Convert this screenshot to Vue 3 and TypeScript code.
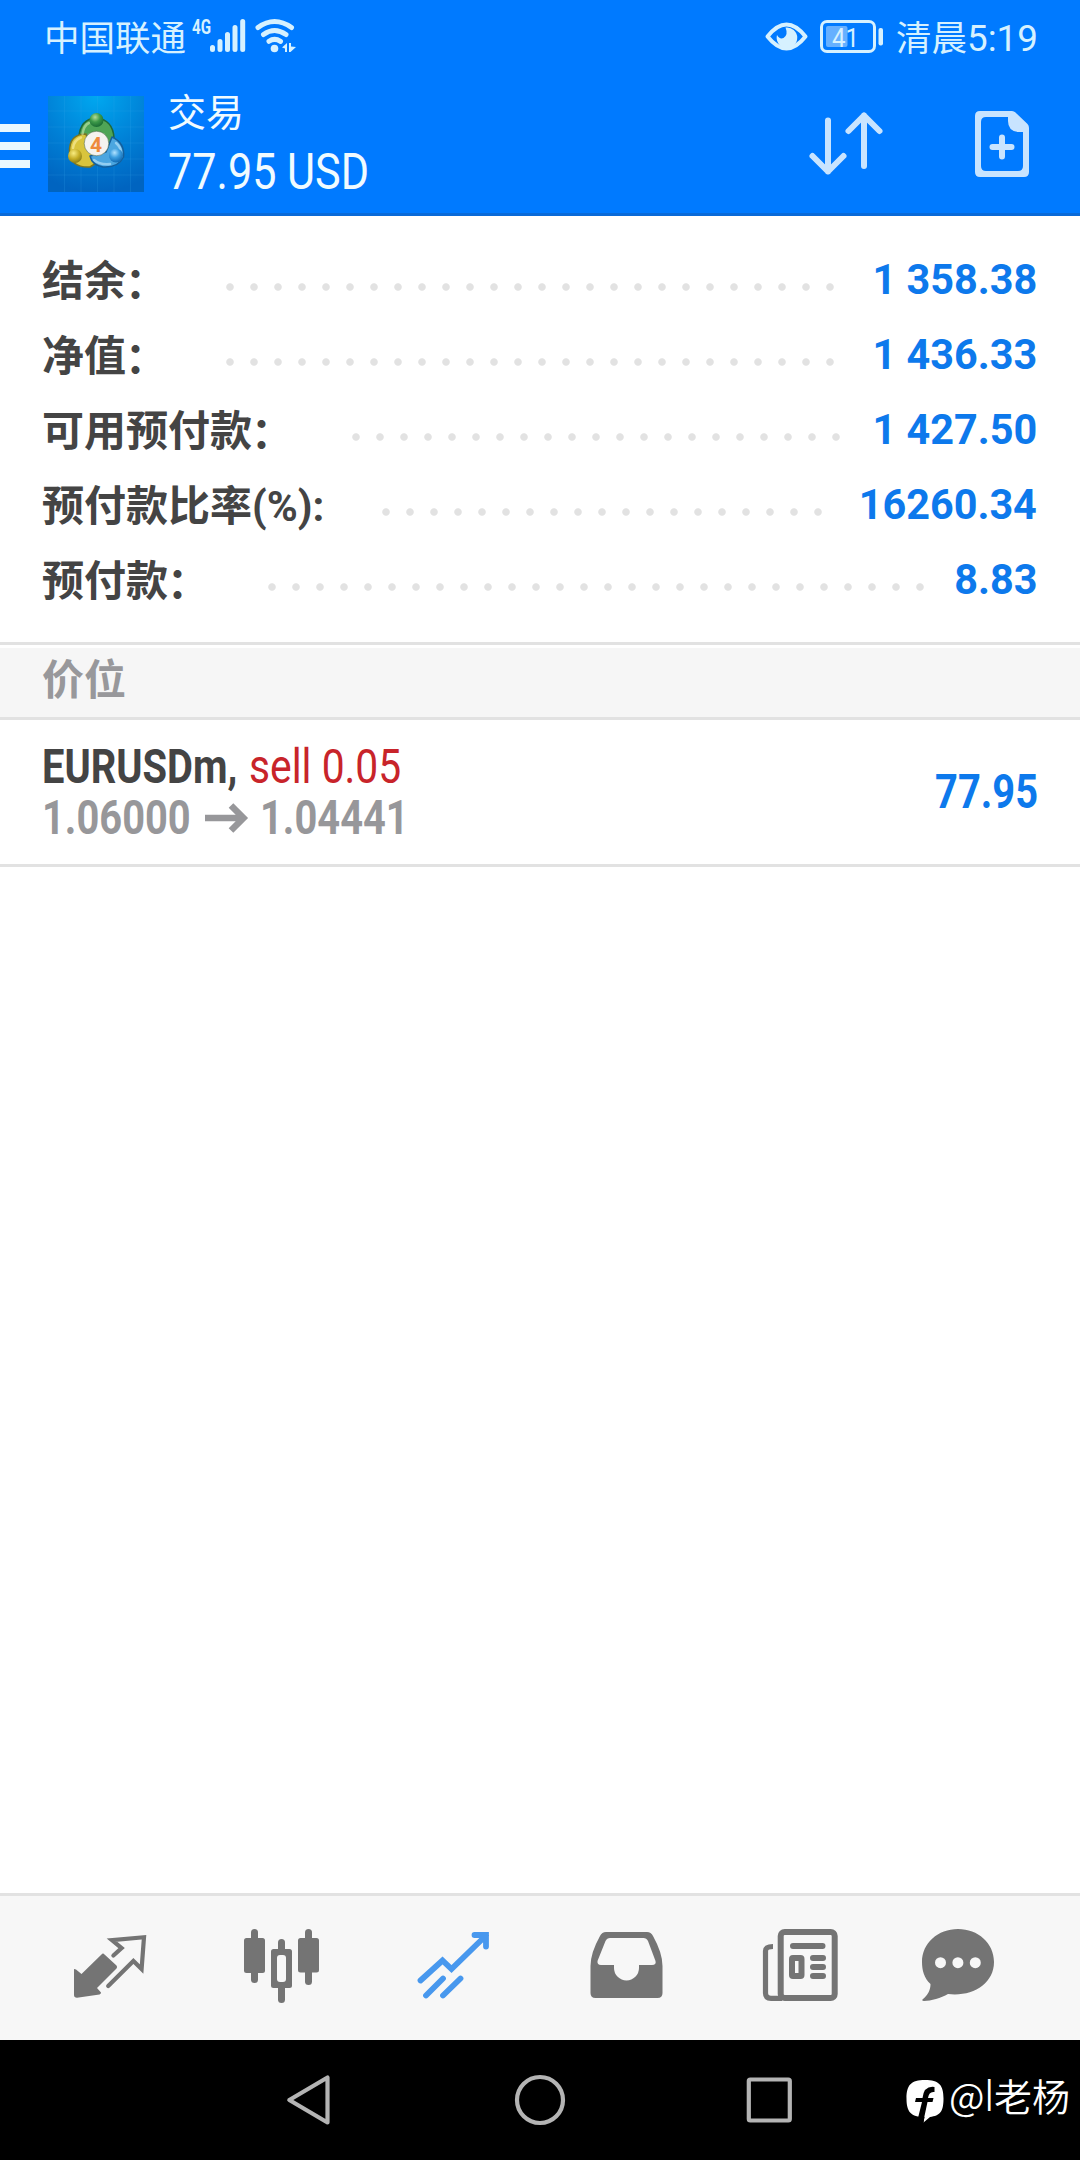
<script setup lang="ts">
interface SummaryRow {
  label: string
  colon: string
  value: string
  dots: number
}

const summary: SummaryRow[] = [
  { label: '结余', colon: '：', value: '1 358.38', dots: 26 },
  { label: '净值', colon: '：', value: '1 436.33', dots: 26 },
  { label: '可用预付款', colon: '：', value: '1 427.50', dots: 21 },
  { label: '预付款比率(%):', colon: '', value: '16260.34', dots: 19 },
  { label: '预付款', colon: '：', value: '8.83', dots: 28 },
]
</script>

<template>
  <div class="screen">
    <header class="top">
      <div class="status">
        <span class="carrier">中国联通</span>
        <svg class="net" viewBox="188 10 116 50" width="116" height="50">
          <text x="192" y="34" class="g4" textLength="19" lengthAdjust="spacingAndGlyphs">4G</text>
          <g stroke="#d6f1ff" stroke-width="5" stroke-linecap="round">
            <path d="M212.5 47.5V49.5M220 41.5V49.5M227.5 34.5V49.5M235 27.5V49.5M242.7 21.5V49.5" />
          </g>
          <g fill="none" stroke="#d6f1ff" stroke-width="5" stroke-linecap="round">
            <path d="M258 27.5Q274.5 15.5 291.500 27.500" />
            <path d="M263.500 34.500Q274.500 26.500 286 34.500" />
            <path d="M269 41.300Q274.500 37.500 280.500 41.300" />
          </g>
          <circle cx="274.500" cy="48.500" r="3.800" fill="#d6f1ff" />
          <path d="M282 47.500L287 43V52H285V48.500ZM289 43H291V46.500L296 47L290.500 52H289Z" fill="#d6f1ff" />
        </svg>
        <div class="grow"></div>
        <svg class="sys" viewBox="760 10 130 50" width="130" height="50">
          <path d="M767.500 36.500Q786.500 12.500 805.500 36.500Q786.500 60.500 767.500 36.500Z" fill="none" stroke="#d6f1ff" stroke-width="4" stroke-linejoin="round" />
          <path d="M785.500 27.500A10.300 10.300 0 1 1 777 35Q779.500 39.500 783.500 38Q788.500 35 785.500 27.500Z" fill="#d6f1ff" />
          <rect x="821.500" y="21.500" width="53" height="30" rx="5.500" fill="none" stroke="#d6f1ff" stroke-width="3" />
          <rect x="826" y="26" width="21.500" height="21" rx="2" fill="#66b0ff" />
          <text x="832" y="46.500" class="pct" textLength="27" lengthAdjust="spacingAndGlyphs">41</text>
          <rect x="878.500" y="28" width="4.500" height="17.500" rx="2" fill="#d6f1ff" />
        </svg>
        <span class="clock">清晨<span class="time">5:19</span></span>
      </div>
      <div class="bar">
        <svg class="menu" viewBox="0 124 30 44" width="30" height="44" fill="#eaf8ff">
          <path d="M0 124H30V132H0ZM0 142H30V150H0ZM0 160H30V168H0Z" />
        </svg>
        <svg class="logo" viewBox="0 0 96 96" width="96" height="96">
          <defs>
            <radialGradient id="bg" cx="0.5" cy="0" r="1">
              <stop offset="0" stop-color="#00a8f0" />
              <stop offset="0.55" stop-color="#0080d6" />
              <stop offset="1" stop-color="#0064c0" />
            </radialGradient>
            <radialGradient id="gr" cx="0.4" cy="0.3" r="0.7"><stop offset="0" stop-color="#b5dc98" /><stop offset="0.5" stop-color="#3d9a49" /><stop offset="1" stop-color="#1a6c34" /></radialGradient>
            <radialGradient id="ye" cx="0.4" cy="0.3" r="0.7"><stop offset="0" stop-color="#f8ec80" /><stop offset="0.6" stop-color="#c4ac24" /><stop offset="1" stop-color="#8d8018" /></radialGradient>
            <radialGradient id="bl" cx="0.4" cy="0.3" r="0.7"><stop offset="0" stop-color="#b0e2ff" /><stop offset="0.5" stop-color="#3d9fe0" /><stop offset="1" stop-color="#126bb4" /></radialGradient>
          </defs>
          <rect width="96" height="96" fill="url(#bg)" />
          <path d="M16.500 0V96M33 0V96M49.500 0V96M66 0V96M82.500 0V96M0 15H96M0 31H96M0 47H96M0 63H96M0 79H96" stroke="#35aef0" stroke-opacity="0.18" />
          <g stroke-linejoin="round" stroke-width="1.500">
            <path d="M31 41Q32 23 48.500 22Q65 24 66 42Q66 50 60 54L36 50Q31 47 31 41Z" fill="#4fa556" stroke="#1f6938" />
            <path d="M38 38Q21 38 21.500 56Q23 72 42 71L50 66L40 46Z" fill="#d9c43c" stroke="#7d7620" />
            <path d="M64 41Q77 47 75.500 61Q70 72 55 71Q44 69 42 60L58 56Z" fill="#4ba6e0" stroke="#145f9c" />
          </g>
          <g fill="none" stroke-linecap="round" stroke-opacity="0.55" stroke-width="2.500">
            <path d="M34.500 38Q36 29 41 27" stroke="#d5f0b8" />
            <path d="M25 52Q26 44 33 41.500" stroke="#fff6b0" />
            <path d="M68 47Q73 51 73 57M46 64Q52 69 62 68" stroke="#d0eeff" />
          </g>
          <circle cx="48.500" cy="24" r="7" fill="url(#gr)" />
          <circle cx="27" cy="60" r="7" fill="url(#ye)" />
          <circle cx="68" cy="59.500" r="7" fill="url(#bl)" />
          <circle cx="48.500" cy="47.500" r="12.300" fill="#f5f3ef" stroke="#3b5a3c" stroke-opacity="0.5" />
          <text x="48" y="55.500" class="four" text-anchor="middle">4</text>
        </svg>
        <div class="titles">
          <div class="title">交易</div>
          <div class="amount"><span>77.95 USD</span></div>
        </div>
        <div class="grow"></div>
        <svg class="actions" viewBox="800 100 240 90" width="240" height="90">
          <g fill="none" stroke="#c8e4ff" stroke-width="6" stroke-linecap="round" stroke-linejoin="round">
            <path d="M828 120.500V171.500M812.500 156L828 171.500L843.500 156" />
            <path d="M864 166V115.500M848.500 131L864 115.500L879.500 131" />
            <path d="M992.500 147H1011.500M1002 137.500V156.500" />
          </g>
          <path fill="#c8e4ff" fill-rule="evenodd" d="M980 111H1012Q1014 111 1015.500 112.500L1027.500 124Q1029 125.500 1029 128V172Q1029 177 1024 177H980Q975 177 975 172V116Q975 111 980 111ZM986 117Q981 117 981 122V166Q981 171 986 171H1018Q1023 171 1023 166V132H1018Q1008 131 1008 121V117Z" />
        </svg>
      </div>
    </header>

    <section class="summary">
      <div v-for="row in summary" :key="row.label" class="row">
        <span class="label">{{ row.label }}<span v-if="row.colon" class="colon">{{ row.colon }}</span></span>
        <span class="dots" :style="{ width: row.dots * 24 + 'px' }"></span>
        <span class="value">{{ row.value }}</span>
      </div>
    </section>

    <div class="section">价位</div>

    <section class="position">
      <div class="info">
        <div class="line"><span class="sym">EURUSDm,</span><span class="side">sell 0.05</span></div>
        <div class="line">
          <span class="price">1.06000</span>
          <svg class="arrow" viewBox="0 0 44 34" width="44" height="34" fill="none" stroke="#97979a" stroke-width="6.500"><path d="M0 17H38M26 4.500L38.500 17L26 29.500" /></svg>
          <span class="price">1.04441</span>
        </div>
      </div>
      <div class="profit">77.95</div>
    </section>

    <main class="blank"></main>

    <nav class="tabs">
      <svg viewBox="69 1896 80 144" width="80" height="144">
        <path d="M101.500 1954.500Q103 1952.500 104.500 1954.500L116.500 1965.500Q117.700 1967 116.500 1968.500L97 1988L101 1992.500Q101 1994 99.500 1994.500L77 1997.700Q74 1997.700 74 1995V1969L76 1969.500L81.500 1974Z" fill="#747474" />
        <path d="M113.400 1955.500L121.600 1948L112 1940.200L144 1937.200L141.600 1969L133.400 1961L108.200 1986" fill="none" stroke="#747474" stroke-width="4.200" stroke-linecap="round" stroke-linejoin="miter" />
      </svg>
      <svg viewBox="241 1896 80 144" width="80" height="144">
        <g fill="#747474">
          <rect x="244" y="1938" width="21" height="35" rx="2.500" /><rect x="251" y="1929" width="7" height="54" rx="3.500" />
          <rect x="298" y="1938" width="21" height="34.500" rx="2.500" /><rect x="305" y="1929" width="7" height="56" rx="3.500" />
          <rect x="278" y="1939" width="7" height="64" rx="3.500" /><rect x="271" y="1949" width="21" height="39" rx="2.500" />
        </g>
        <rect x="277" y="1955" width="9" height="27" rx="3" fill="#f7f7f7" />
      </svg>
      <svg viewBox="413 1896 80 144" width="80" height="144">
        <path d="M420.500 1980.500L442.500 1960.500L451.500 1969L486 1935.500M474.500 1935H486V1946.500M443 1978.500L426 1995.500M460.500 1978.500L443 1995.500" fill="none" stroke="#4898ee" stroke-width="5.800" stroke-linecap="round" stroke-linejoin="miter" />
      </svg>
      <svg viewBox="585 1896 80 144" width="80" height="144">
        <path fill="#747474" fill-rule="evenodd" d="M606 1932H647Q651 1932 653 1936Q662.500 1953 662.500 1966V1993Q662.500 1998 657.500 1998H595.500Q590.500 1998 590.500 1993V1966Q590.500 1953 600 1936Q602 1932 606 1932ZM610 1938Q607 1938 605.500 1941L597.500 1961Q597 1965 601 1965H614V1968A12.500 12.500 0 0 0 639 1968V1965H652Q656.500 1965 655.500 1961L648 1941Q646.500 1938 643.500 1938Z" />
      </svg>
      <svg viewBox="760 1896 80 144" width="80" height="144">
        <g fill="none" stroke="#747474">
          <rect x="780.700" y="1932" width="54" height="66" rx="4" stroke-width="6" />
          <path d="M773 1946.500Q765.500 1946.500 765.500 1951V1993Q765.500 1998.300 771 1998.300H782" stroke-width="5.200" />
          <path d="M793 1946H822.500M813 1958H823M813 1967H823M813 1976H823" stroke-width="6" stroke-linecap="round" />
          <rect x="792" y="1958" width="9.500" height="18" rx="1" stroke-width="6" />
        </g>
      </svg>
      <svg viewBox="918 1896 80 144" width="80" height="144">
        <path fill="#747474" d="M958 1929C978 1929 994 1943 994 1962C994 1984 972 1997 948 1994C941 1998 931 2001 924 2001Q921 2000.500 923 1999C928 1995 930.500 1990 930.500 1984C924 1978 922 1970 922 1962C922 1943 938 1929 958 1929Z" />
        <g fill="#f7f7f7"><circle cx="940.500" cy="1962.700" r="5.500" /><circle cx="957.900" cy="1962.700" r="5.500" /><circle cx="975.300" cy="1962.700" r="5.500" /></g>
      </svg>
    </nav>

    <footer class="system">
      <svg class="keys" viewBox="280 2040 520 120" width="520" height="120" fill="none" stroke="#b4b4b4" stroke-width="4.200" stroke-linejoin="round">
        <path d="M289.300 2100L327.500 2077.500V2122.500Z" />
        <circle cx="540" cy="2100" r="23" />
        <rect x="748.800" y="2079.500" width="41" height="41" rx="1.500" />
      </svg>
      <div class="mark">
        <svg viewBox="904 2076 42 50" width="42" height="50">
          <path fill="#fff" d="M925 2080C939 2080 943.500 2085 943.500 2098.500C943.500 2112 940 2115.500 930 2117L923.500 2122.500L924.500 2117C911 2117 906.500 2112 906.500 2098.500C906.500 2085 911 2080 925 2080Z" />
          <path fill="#000" d="M934.500 2087V2092Q929 2091 928 2098H933.500L932.500 2102H927.500L924.500 2116L923.500 2122H917L922 2102H915L916 2098H922.500Q924 2085.500 934.500 2087Z" />
        </svg>
        <span class="user">@<span class="bar-l">l</span>老杨</span>
      </div>
    </footer>
  </div>
</template>

<style>
body {
  margin: 0;
  background: #fff;
}
</style>

<style scoped>
.screen {
  width: 1080px;
  height: 2160px;
  display: flex;
  flex-direction: column;
  overflow: hidden;
  background: #fff;
  font-family: Roboto, "Noto Sans CJK SC", sans-serif;
}
svg {
  display: block;
  flex: none;
}
.grow {
  flex: 1;
}
.top {
  box-sizing: border-box;
  height: 216px;
  background: #007aff;
  border-bottom: 3px solid #0a6ad8;
  color: #f0fbff;
}
.status {
  display: flex;
  height: 72px;
  color: #d6f1ff;
  white-space: nowrap;
}
.carrier {
  width: 144px;
  margin-left: 44px;
  font: 400 35.5px/72px "Noto Sans CJK SC", sans-serif;
}
.net,
.sys {
  margin-top: 10px;
}
.g4 {
  font: 700 21px Roboto, sans-serif;
  fill: #d6f1ff;
}
.pct {
  font: 400 26px Roboto, sans-serif;
  fill: #d6f1ff;
}
.clock {
  width: 184px;
  margin-left: 6px;
  font: 400 35.5px/72px "Noto Sans CJK SC", sans-serif;
}
.time {
  font-family: Roboto, sans-serif;
  font-size: 36.8px;
}
.bar {
  display: flex;
  height: 141px;
}
.menu {
  margin-top: 52px;
}
.logo {
  margin: 24px 0 0 18px;
}
.four {
  font: 700 21px Roboto, sans-serif;
  fill: #ee8a3c;
}
.titles {
  margin-left: 24px;
  white-space: nowrap;
}
.title {
  height: 76px;
  font: 400 38px/76px "Noto Sans CJK SC", sans-serif;
}
.amount {
  font: 400 50px/49px Roboto, sans-serif;
}
.amount span {
  display: inline-block;
  transform: scaleX(0.863);
  transform-origin: 0 0;
}
.actions {
  margin: 28px 40px 0 0;
}
.summary {
  height: 426px;
  box-sizing: border-box;
  padding: 27px 43px 0 42px;
}
.row {
  display: flex;
  align-items: center;
  height: 75px;
  white-space: nowrap;
}
.label {
  position: relative;
  top: 1px;
  font: 700 42px/77px Roboto, "Noto Sans CJK SC", sans-serif;
  color: #444;
}
.colon {
  position: relative;
  top: 2px;
  margin: 0 1px 0 -1px;
}
.dots {
  height: 8px;
  margin: 13px 0 0 50px;
  background: radial-gradient(circle at center, #e2e2e2 3.300px, transparent 4.200px) 0 0 / 24px 8px repeat-x;
}
.value {
  margin-left: auto;
  font: 700 42px/73px Roboto, sans-serif;
  transform: scaleX(0.985) translateY(-1px);
  transform-origin: 100% 0;
  color: #0d79ec;
}
.section {
  box-sizing: border-box;
  height: 78px;
  padding: 0 42px;
  border-top: 3px solid #e2e2e2;
  border-bottom: 3px solid #e2e2e2;
  background: #f6f6f6;
  box-shadow: inset 0 3px #fff;
  font: 700 42px/63px "Noto Sans CJK SC", sans-serif;
  color: #98989b;
}
.position {
  box-sizing: border-box;
  height: 147px;
  display: flex;
  justify-content: space-between;
  border-bottom: 3px solid #e2e2e2;
  padding: 0 42px;
  white-space: nowrap;
}
.info {
  padding-top: 21px;
}
.line {
  display: flex;
  height: 51px;
  line-height: 51px;
  font-size: 48px;
}
.sym,
.price,
.profit {
  transform: scaleX(0.83);
  transform-origin: 0 0;
}
.sym {
  width: 207px;
  font-weight: 700;
  color: #444;
}
.side {
  transform: scaleX(0.85);
  transform-origin: 0 0;
  color: #c8242a;
}
.price {
  width: 160px;
  font-weight: 700;
  color: #97979a;
}
.arrow {
  margin: 9px 11px 0 3px;
}
.profit {
  transform-origin: 100% 0;
  font: 700 48px/144px Roboto, sans-serif;
  color: #0d79ec;
}
.blank {
  flex: 1;
}
.tabs {
  box-sizing: border-box;
  height: 147px;
  display: grid;
  grid-template-columns: 172px 172px 172px 172px 178px 138px;
  justify-items: center;
  padding-left: 23px;
  border-top: 3px solid #e2e2e2;
  background: #f7f7f7;
}
.system {
  display: flex;
  height: 120px;
  background: #000;
}
.keys {
  margin-left: 280px;
}
.mark {
  display: flex;
  margin-left: 104px;
  padding-top: 36px;
  color: #fff;
  white-space: nowrap;
}
.user {
  margin-left: 3px;
  font: 350 38px/38px "Noto Sans CJK SC", sans-serif;
}
.bar-l {
  font: 300 42px/38px Roboto, sans-serif;
}
</style>
